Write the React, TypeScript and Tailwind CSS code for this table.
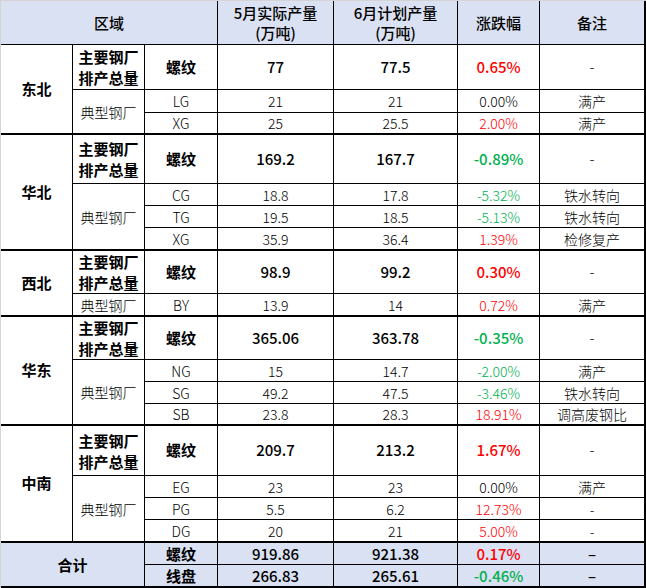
import type { ReactNode } from "react";

type Tone = "red" | "green" | "plain";

interface SubRow {
  mill: string;
  may: string;
  june: string;
  change: string;
  tone: Tone;
  note: string;
  height: number;
}

interface Region {
  name: string;
  mainHeight: number;
  may: string;
  june: string;
  change: string;
  tone: Tone;
  subs: SubRow[];
}

const REGIONS: Region[] = [
  {
    name: "东北",
    mainHeight: 45,
    may: "77",
    june: "77.5",
    change: "0.65%",
    tone: "red",
    subs: [
      { mill: "LG", may: "21", june: "21", change: "0.00%", tone: "plain", note: "满产", height: 23 },
      { mill: "XG", may: "25", june: "25.5", change: "2.00%", tone: "red", note: "满产", height: 22 },
    ],
  },
  {
    name: "华北",
    mainHeight: 49,
    may: "169.2",
    june: "167.7",
    change: "-0.89%",
    tone: "green",
    subs: [
      { mill: "CG", may: "18.8", june: "17.8", change: "-5.32%", tone: "green", note: "铁水转向", height: 22 },
      { mill: "TG", may: "19.5", june: "18.5", change: "-5.13%", tone: "green", note: "铁水转向", height: 22 },
      { mill: "XG", may: "35.9", june: "36.4", change: "1.39%", tone: "red", note: "检修复产", height: 23 },
    ],
  },
  {
    name: "西北",
    mainHeight: 43,
    may: "98.9",
    june: "99.2",
    change: "0.30%",
    tone: "red",
    subs: [
      { mill: "BY", may: "13.9", june: "14", change: "0.72%", tone: "red", note: "满产", height: 23 },
    ],
  },
  {
    name: "华东",
    mainHeight: 43,
    may: "365.06",
    june: "363.78",
    change: "-0.35%",
    tone: "green",
    subs: [
      { mill: "NG", may: "15", june: "14.7", change: "-2.00%", tone: "green", note: "满产", height: 22 },
      { mill: "SG", may: "49.2", june: "47.5", change: "-3.46%", tone: "green", note: "铁水转向", height: 22 },
      { mill: "SB", may: "23.8", june: "28.3", change: "18.91%", tone: "red", note: "调高废钢比", height: 22 },
    ],
  },
  {
    name: "中南",
    mainHeight: 50,
    may: "209.7",
    june: "213.2",
    change: "1.67%",
    tone: "red",
    subs: [
      { mill: "EG", may: "23", june: "23", change: "0.00%", tone: "plain", note: "满产", height: 22 },
      { mill: "PG", may: "5.5", june: "6.2", change: "12.73%", tone: "red", note: "-", height: 22 },
      { mill: "DG", may: "20", june: "21", change: "5.00%", tone: "red", note: "-", height: 23 },
    ],
  },
];

const toneClass: Record<Tone, string> = {
  red: "text-[#ff0000]",
  green: "text-[#00b050]",
  plain: "text-black",
};

// Every cell draws only its right and bottom edge; group ends get the heavy rule.
function Cell({
  children,
  className = "",
  rowSpan,
  colSpan,
  last = false,
  heavy = false,
}: {
  children?: ReactNode;
  className?: string;
  rowSpan?: number;
  colSpan?: number;
  last?: boolean;
  heavy?: boolean;
}) {
  return (
    <td
      rowSpan={rowSpan}
      colSpan={colSpan}
      className={`border-black p-0 text-center align-middle ${last ? "border-r-2" : "border-r"} ${
        heavy ? "border-b-2" : "border-b"
      } ${className}`}
    >
      {children}
    </td>
  );
}

export default function App() {
  return (
    <div className="h-[588px] w-[646px] bg-white font-['Noto_Sans_CJK_SC','Noto_Sans',sans-serif] text-black">
      <div className="border-l border-t border-[#d4d4d4]">
        <table className="w-[645px] table-fixed border-separate border-spacing-0">
          <colgroup>
            <col className="w-[72px]" />
            <col className="w-[72px]" />
            <col className="w-[73px]" />
            <col className="w-[116px]" />
            <col className="w-[124px]" />
            <col className="w-[82px]" />
            <col className="w-[106px]" />
          </colgroup>
          <thead>
            <tr className="h-[44px] bg-[#d9e1f2] text-[15px] font-medium leading-[20px]">
              <Cell colSpan={3}>区域</Cell>
              <Cell>
                5月实际产量
                <br />
                (万吨)
              </Cell>
              <Cell>
                6月计划产量
                <br />
                (万吨)
              </Cell>
              <Cell>涨跌幅</Cell>
              <Cell last>备注</Cell>
            </tr>
          </thead>
          <tbody>
            {REGIONS.map((r) => {
              const span = r.subs.length + 1;
              return [
                <tr
                  key={`${r.name}-main`}
                  className="text-[15px] font-medium"
                  style={{ height: r.mainHeight }}
                >
                  <Cell rowSpan={span} heavy className="font-bold">
                    {r.name}
                  </Cell>
                  <Cell className="font-bold leading-[21px]">
                    主要钢厂
                    <br />
                    排产总量
                  </Cell>
                  <Cell className="font-bold">螺纹</Cell>
                  <Cell>{r.may}</Cell>
                  <Cell>{r.june}</Cell>
                  <Cell className={toneClass[r.tone]}>{r.change}</Cell>
                  <Cell last className="font-light">
                    -
                  </Cell>
                </tr>,
                ...r.subs.map((s, i) => {
                  const end = i === r.subs.length - 1;
                  return (
                    <tr
                      key={`${r.name}-${s.mill}`}
                      className="text-[14px] font-light leading-[20px]"
                      style={{ height: s.height }}
                    >
                      {i === 0 && (
                        <Cell rowSpan={r.subs.length} heavy>
                          典型钢厂
                        </Cell>
                      )}
                      <Cell heavy={end}>{s.mill}</Cell>
                      <Cell heavy={end}>{s.may}</Cell>
                      <Cell heavy={end}>{s.june}</Cell>
                      <Cell heavy={end} className={toneClass[s.tone]}>
                        {s.change}
                      </Cell>
                      <Cell heavy={end} last>
                        {s.note}
                      </Cell>
                    </tr>
                  );
                }),
              ];
            })}
            <tr className="h-[22px] bg-[#d9e1f2] text-[15px] font-medium leading-[20px]">
              <Cell colSpan={2} rowSpan={2} heavy className="font-bold">
                合计
              </Cell>
              <Cell className="font-bold">螺纹</Cell>
              <Cell>919.86</Cell>
              <Cell>921.38</Cell>
              <Cell className={toneClass.red}>0.17%</Cell>
              <Cell last>–</Cell>
            </tr>
            <tr className="h-[23px] bg-[#d9e1f2] text-[15px] font-medium leading-[20px]">
              <Cell heavy className="font-bold">
                线盘
              </Cell>
              <Cell heavy>266.83</Cell>
              <Cell heavy>265.61</Cell>
              <Cell heavy className={toneClass.green}>
                -0.46%
              </Cell>
              <Cell heavy last>
                –
              </Cell>
            </tr>
          </tbody>
        </table>
      </div>
    </div>
  );
}
